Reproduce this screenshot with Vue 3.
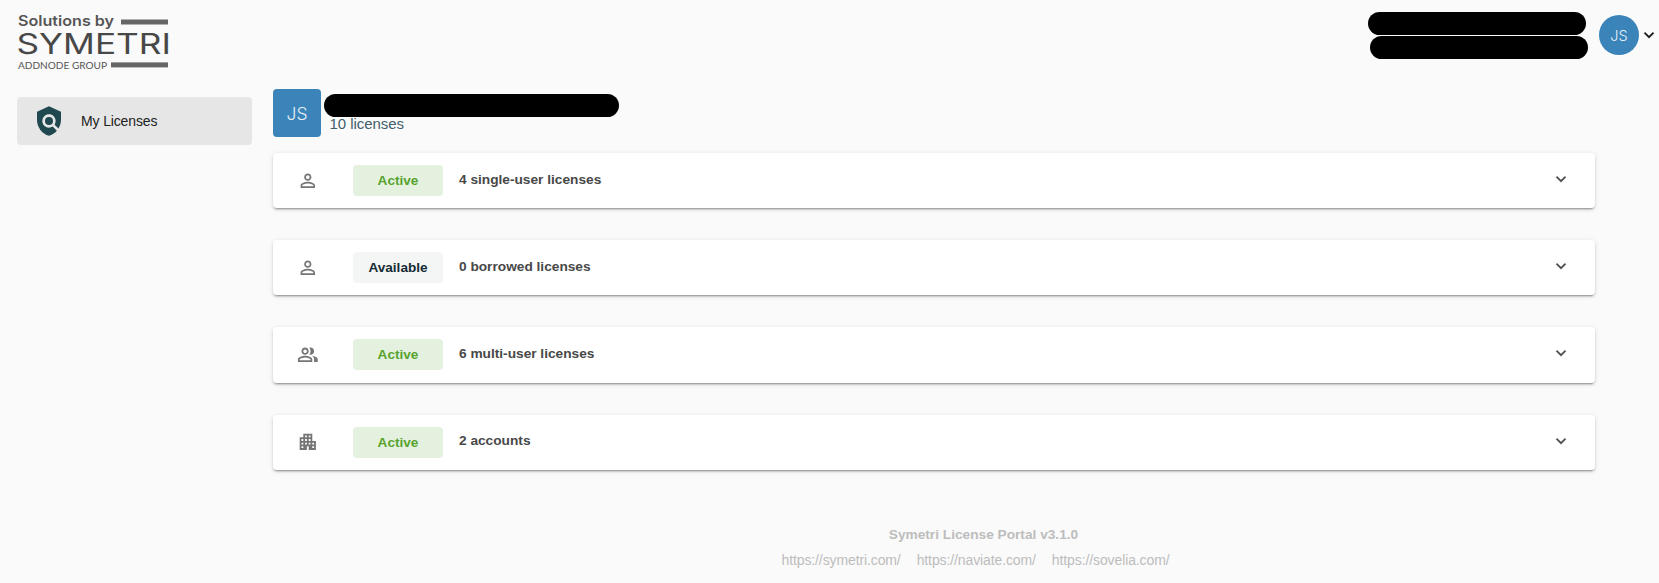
<script setup>
const rows = [
  { icon: 'person', status: 'Active', title: '4 single-user licenses' },
  { icon: 'person', status: 'Available', title: '0 borrowed licenses' },
  { icon: 'people', status: 'Active', title: '6 multi-user licenses' },
  { icon: 'building', status: 'Active', title: '2 accounts' },
]
const paths = {
  person:
    'M12 5.9a2.1 2.1 0 1 1 0 4.2 2.1 2.1 0 0 1 0-4.2m0 9c2.97 0 6.1 1.46 6.1 2.1v1.1H5.9V17c0-.64 3.13-2.1 6.1-2.1M12 4C9.79 4 8 5.79 8 8s1.79 4 4 4 4-1.79 4-4-1.79-4-4-4zm0 9c-2.67 0-8 1.34-8 4v3h16v-3c0-2.66-5.33-4-8-4z',
  people:
    'M16.67 13.13C18.04 14.06 19 15.32 19 17v3h4v-3c0-2.18-3.57-3.47-6.33-3.87zM15 12c2.21 0 4-1.79 4-4s-1.79-4-4-4c-.47 0-.91.1-1.33.24C14.5 5.27 15 6.58 15 8s-.5 2.73-1.33 3.76c.42.14.86.24 1.33.24zM9 12c2.21 0 4-1.79 4-4s-1.79-4-4-4-4 1.79-4 4 1.79 4 4 4zm0-6c1.1 0 2 .9 2 2s-.9 2-2 2-2-.9-2-2 .9-2 2-2zM9 13c-2.67 0-8 1.34-8 4v3h16v-3c0-2.66-5.33-4-8-4zm6 5H3v-.99C3.2 16.29 6.3 15 9 15s5.8 1.29 6 2v1z',
  building:
    'M17 11V3H7v4H3v14h8v-4h2v4h8V11h-4zM7 19H5v-2h2v2zm0-4H5v-2h2v2zm0-4H5V9h2v2zm4 4H9v-2h2v2zm0-4H9V9h2v2zm0-4H9V5h2v2zm4 8h-2v-2h2v2zm0-4h-2V9h2v2zm0-4h-2V5h2v2zm4 12h-2v-2h2v2zm0-4h-2v-2h2v2z',
}
const links = ['https://symetri.com/', 'https://naviate.com/', 'https://sovelia.com/']
</script>

<template>
  <div class="page">
    <header class="top">
      <svg class="logo" width="160" height="60" viewBox="0 0 160 60">
        <text class="logo-a" x="1" y="15.8" textLength="96" lengthAdjust="spacingAndGlyphs">Solutions by</text>
        <rect x="104" y="9.5" width="47" height="5" fill="#666" />
        <text class="logo-b" x="-0.5" y="44.4" textLength="154.5" lengthAdjust="spacingAndGlyphs">SYMETRI</text>
        <text class="logo-c" x="1" y="58.6" textLength="89" lengthAdjust="spacingAndGlyphs">ADDNODE GROUP</text>
        <rect x="94" y="52.4" width="57" height="5" fill="#666" />
      </svg>
      <div class="user">
        <div class="masks">
          <div class="mask"></div>
          <div class="mask second"></div>
        </div>
        <div class="avatar round">JS</div>
        <svg class="caret" width="20" height="20" viewBox="0 0 24 24">
          <path d="M7.41 8.59 12 13.17l4.59-4.58L18 10l-6 6-6-6z" />
        </svg>
      </div>
    </header>

    <div class="body">
      <nav class="side">
        <a class="nav-item">
          <svg width="32" height="32" viewBox="0 0 24 24" fill="#1f4850">
            <path d="M21 5l-9-4-9 4v6c0 5.55 3.84 10.74 9 12 2.3-.56 4.33-1.9 5.88-3.71l-3.12-3.12c-1.94 1.29-4.58 1.07-6.29-.64-1.95-1.95-1.95-5.12 0-7.07 1.95-1.95 5.12-1.95 7.07 0 1.71 1.71 1.92 4.35.64 6.29l2.9 2.9C20.29 15.69 21 13.38 21 11V5z" />
            <circle cx="12" cy="12" r="3" />
          </svg>
          <span>My Licenses</span>
        </a>
      </nav>

      <main class="main">
        <div class="owner">
          <div class="avatar square">JS</div>
          <div class="owner-info">
            <div class="mask name"></div>
            <div class="count">10 licenses</div>
          </div>
        </div>

        <section v-for="row in rows" :key="row.title" class="card">
          <svg class="kind" width="21.6" height="21.6" viewBox="0 0 24 24">
            <path :d="paths[row.icon]" />
          </svg>
          <span class="badge" :class="row.status.toLowerCase()">{{ row.status }}</span>
          <span class="title">{{ row.title }}</span>
          <svg class="chev" width="20" height="20" viewBox="0 0 24 24">
            <path d="M7.41 8.59 12 13.17l4.59-4.58L18 10l-6 6-6-6z" />
          </svg>
        </section>

        <footer class="foot">
          <div class="version">Symetri License Portal v3.1.0</div>
          <div class="links">
            <a v-for="link in links" :key="link">{{ link }}</a>
          </div>
        </footer>
      </main>
    </div>
  </div>
</template>

<style>
body {
  background: #fafafa;
  overflow: hidden;
}
</style>

<style scoped>
.page {
  box-sizing: border-box;
  height: 583px;
  overflow: hidden;
  background: #fafafa;
  font-family: 'Liberation Sans', Arial, sans-serif;
}
.top {
  display: flex;
  justify-content: space-between;
  height: 89px;
}
.logo {
  margin: 10px 0 0 17px;
}
.logo text {
  font-family: Inter, sans-serif;
  fill: #484848;
}
.logo .logo-a {
  font-size: 14.4px;
  font-weight: 600;
  fill: #555;
}
.logo .logo-b {
  font-size: 28.2px;
  font-weight: 400;
}
.logo .logo-c {
  font-family: Lato, sans-serif;
  font-size: 10.4px;
  fill: #555;
}
.user {
  display: flex;
  align-items: flex-start;
}
.masks {
  padding-top: 12px;
  margin-right: 11px;
}
.mask {
  width: 218px;
  height: 23px;
  border-radius: 12px;
  background: #000;
}
.mask.second {
  margin: 1px 0 0 2px;
}
.avatar {
  display: flex;
  align-items: center;
  justify-content: center;
  background: #3a84ba;
  color: #e6eff6;
  font-family: Inter, sans-serif;
  font-weight: 300;
}
.round {
  width: 40px;
  height: 40px;
  margin-top: 15px;
  border-radius: 50%;
  font-size: 14.5px;
}
.square {
  width: 48px;
  height: 48px;
  border-radius: 4px;
  font-size: 17.5px;
}
.caret {
  margin: 25px 0 0;
  fill: #111;
  stroke: #111;
  stroke-width: 0.3;
}
.body {
  display: flex;
}
.side {
  width: 235px;
  margin: 8px 21px 0 17px;
}
.nav-item {
  display: flex;
  align-items: center;
  height: 48px;
  padding-left: 16px;
  border-radius: 4px;
  background: #e6e6e6;
  color: #212121;
  font-size: 14px;
  letter-spacing: -0.14px;
}
.nav-item span {
  margin-left: 16px;
}
.main {
  width: 1322px;
}
.owner {
  display: flex;
  height: 48px;
  margin-bottom: 16px;
}
.owner-info {
  padding: 5px 0 0 3px;
}
.mask.name {
  width: 295px;
}
.count {
  margin: -1px 0 0 5.5px;
  color: #41606a;
  font-size: 15px;
  line-height: 16px;
  letter-spacing: -0.05px;
}
.card {
  display: flex;
  align-items: center;
  box-sizing: border-box;
  height: 55.2px;
  margin-bottom: 32px;
  padding: 0 24px;
  border-radius: 4px;
  background: #fff;
  box-shadow: 0 3px 1px -2px rgba(0, 0, 0, 0.2), 0 2px 2px 0 rgba(0, 0, 0, 0.14), 0 1px 5px 0 rgba(0, 0, 0, 0.12);
}
.kind {
  fill: #757575;
}
.badge {
  width: 90px;
  margin-left: 34.4px;
  border-radius: 4px;
  font-size: 13.6px;
  font-weight: 700;
  line-height: 31px;
  text-align: center;
}
.badge.active {
  background: #e5f1df;
  color: #56a32f;
}
.badge.available {
  background: #f4f6f6;
  color: #142b33;
}
.title {
  margin: -3px 0 0 16px;
  color: #484848;
  font-size: 13.7px;
  font-weight: 700;
}
.chev {
  margin: -3px 0 0 auto;
  fill: #484848;
  stroke: #484848;
  stroke-width: 0.3;
}
.foot {
  margin-top: 55px;
  padding-left: 99px;
  color: #bdbdbd;
  font-size: 14px;
  text-align: center;
}
.version {
  font-size: 13.7px;
  font-weight: 700;
  line-height: 20px;
}
.links {
  display: flex;
  justify-content: center;
  line-height: 20px;
  margin-top: 5px;
  letter-spacing: -0.11px;
}
.links a {
  margin-right: 16px;
}
</style>
